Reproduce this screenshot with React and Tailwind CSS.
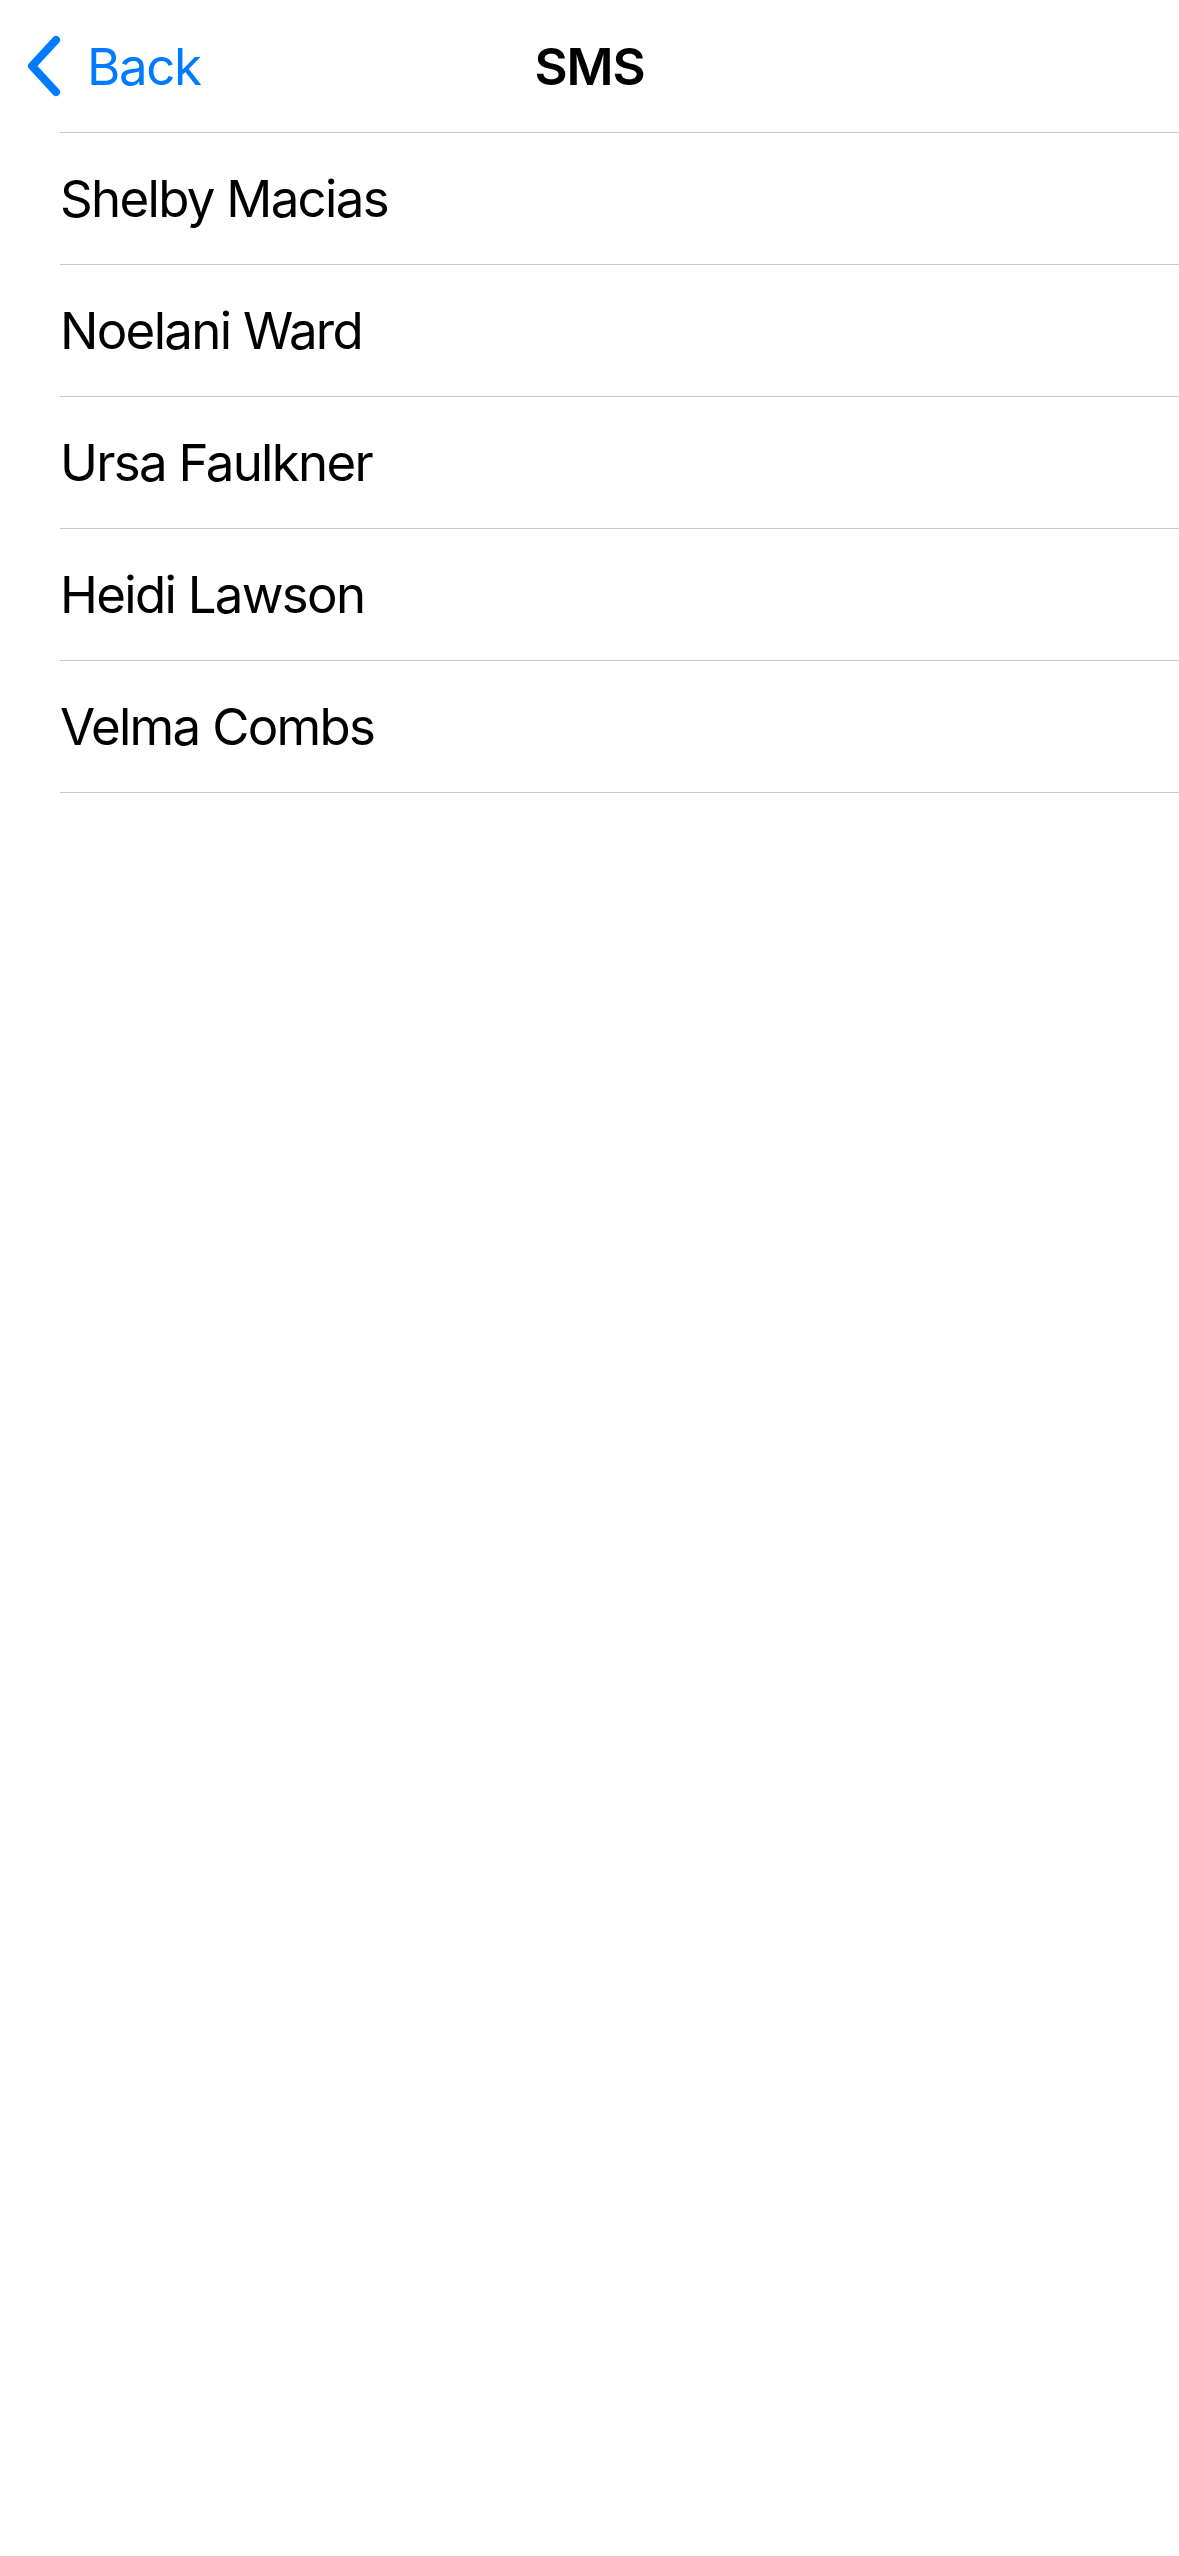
import React from "react";

const names = ["Shelby Macias", "Noelani Ward", "Ursa Faulkner", "Heidi Lawson", "Velma Combs"];

export default function App() {
  return (
    <div className="min-h-screen w-full bg-white" style={{ fontFamily: "Inter, 'Noto Sans', sans-serif" }}>
      <div className="grid h-[132px] grid-cols-[1fr_auto_1fr] items-center">
        <div className="flex items-center pl-[24px] text-[#007AFF]">
          <svg width="40" height="64" viewBox="0 0 40 64" fill="none" className="shrink-0">
            <path d="M32 6 L8 32 L32 58" stroke="#007AFF" strokeWidth="8" strokeLinecap="round" strokeLinejoin="round" />
          </svg>
          <span className="ml-[23px] text-[51px] leading-none tracking-[-1.4px]">Back</span>
        </div>
        <div className="text-[51px] font-semibold leading-none tracking-[-1.2px] text-black">SMS</div>
        <div />
      </div>
      <div className="ml-[60px] border-t border-[#c8c7cc]">
        {names.map((n) => (
          <div key={n} className="flex h-[132px] items-center border-b border-[#c8c7cc]">
            <span className="text-[51px] leading-none tracking-[-1.7px] text-black">{n}</span>
          </div>
        ))}
      </div>
    </div>
  );
}
